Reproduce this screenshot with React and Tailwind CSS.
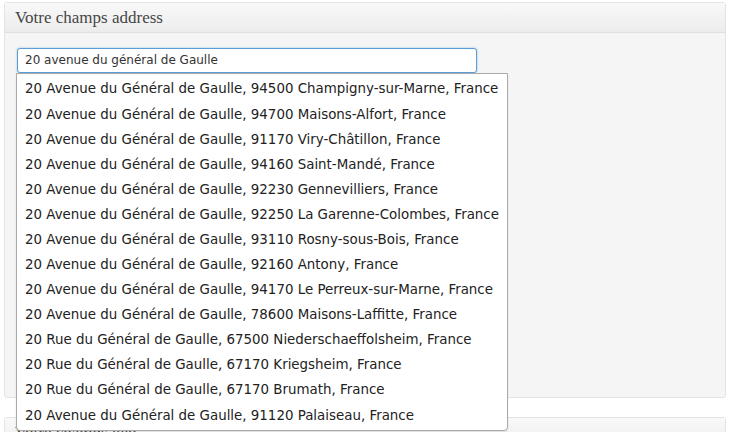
const results = [
  '20 Avenue du Général de Gaulle, 94500 Champigny-sur-Marne, France',
  '20 Avenue du Général de Gaulle, 94700 Maisons-Alfort, France',
  '20 Avenue du Général de Gaulle, 91170 Viry-Châtillon, France',
  '20 Avenue du Général de Gaulle, 94160 Saint-Mandé, France',
  '20 Avenue du Général de Gaulle, 92230 Gennevilliers, France',
  '20 Avenue du Général de Gaulle, 92250 La Garenne-Colombes, France',
  '20 Avenue du Général de Gaulle, 93110 Rosny-sous-Bois, France',
  '20 Avenue du Général de Gaulle, 92160 Antony, France',
  '20 Avenue du Général de Gaulle, 94170 Le Perreux-sur-Marne, France',
  '20 Avenue du Général de Gaulle, 78600 Maisons-Laffitte, France',
  '20 Rue du Général de Gaulle, 67500 Niederschaeffolsheim, France',
  '20 Rue du Général de Gaulle, 67170 Kriegsheim, France',
  '20 Rue du Général de Gaulle, 67170 Brumath, France',
  '20 Avenue du Général de Gaulle, 91120 Palaiseau, France',
];

function Panel({ title, children, className = '' }) {
  return (
    <div className={`border border-[#e3e3e3] rounded-[3px] bg-[#f5f5f5] ${className}`}>
      <div className="h-[30px] border-b border-[#dfdfdf] bg-gradient-to-b from-[#f9f9f9] to-[#ececec] px-[10px] flex items-center">
        <h3 className="text-[17px] text-[#464646] font-['Liberation_Serif',serif] leading-none">{title}</h3>
      </div>
      {children}
    </div>
  );
}

export default function App() {
  return (
    <div className="w-[729px] h-[432px] overflow-hidden bg-white font-['DejaVu_Sans',sans-serif] pt-[2px] pl-[4px] pr-[3px]">
      <Panel title="Votre champs address" className="h-[396px]">
        <div className="relative pt-[14px] pl-[12px]">
          <input
            readOnly
            value="20 avenue du général de Gaulle"
            className="w-[460px] h-[25px] border border-[#5b9dd9] rounded-[3px] bg-white px-[7px] text-[12px] text-[#333] outline-none shadow-[0_0_2px_rgba(30,140,190,0.5)] font-['DejaVu_Sans',sans-serif]"
          />
          <ul className="absolute z-10 left-[11px] top-[40px] w-[492px] bg-white border border-[#aaa] rounded-b-[4px] pt-[3px] pb-[2px] shadow-[0_1px_2px_rgba(0,0,0,0.1)]">
            {results.map(r => (
              <li key={r} className="h-[25.08px] flex items-center px-[8px] text-[13.4px] text-[#222] whitespace-nowrap">{r}</li>
            ))}
          </ul>
        </div>
      </Panel>
      <Panel title="Votre champs geo" className="mt-[19px] h-[60px]" />
    </div>
  );
}
